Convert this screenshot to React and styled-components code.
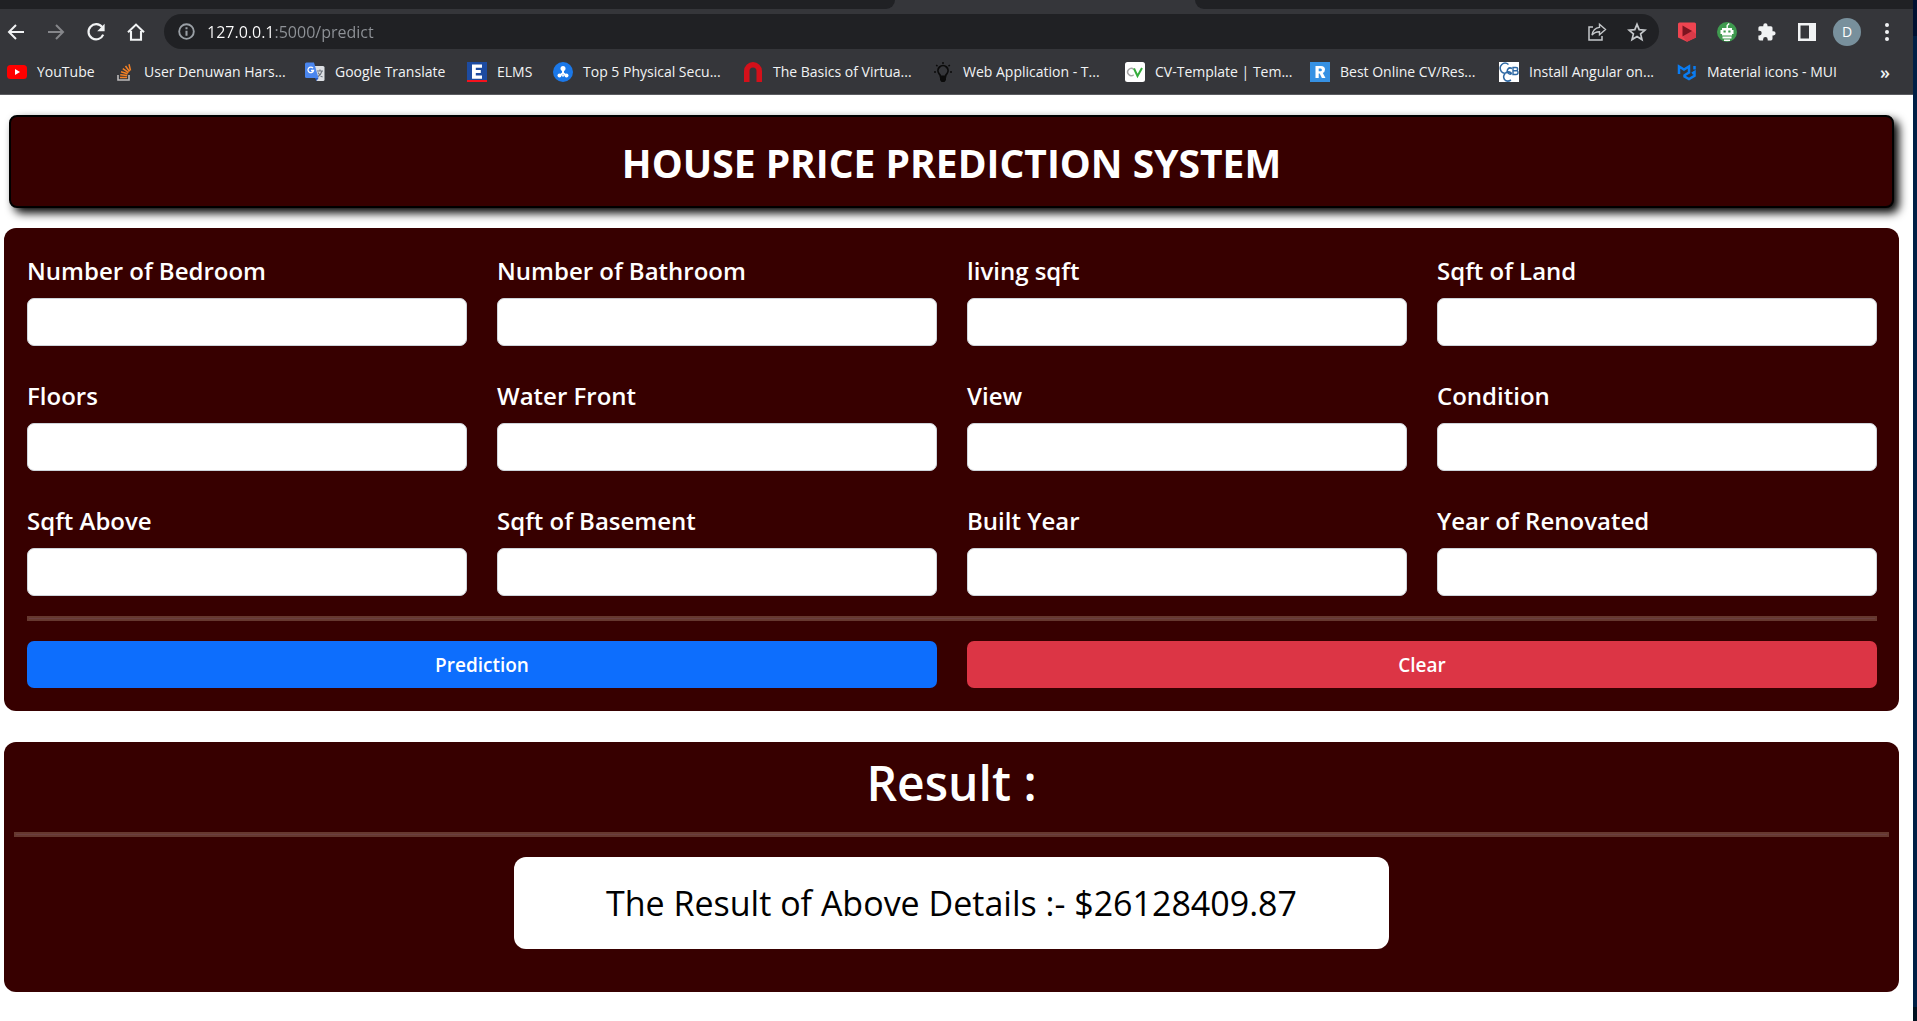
import React from "react";
import styled, { createGlobalStyle } from "styled-components";

const GlobalStyle = createGlobalStyle`
  *, *::before, *::after { box-sizing: border-box; }
  body {
    margin: 0;
    background: #fff;
    font-family: "Open Sans", "Noto Sans", sans-serif;
  }
  h1, h2, p { margin: 0; }
  button, input { font: inherit; }
`;

const Screen = styled.div`
  display: flex;
  min-height: 100vh;
`;

const Browser = styled.div`
  flex: 1;
  min-width: 0;
`;

const DesktopEdge = styled.div`
  width: 4px;
  background: linear-gradient(#001030 0 36px, #001f45 36px calc(100% - 14px), #00101f 0);
`;

const TabStrip = styled.div`
  display: grid;
  grid-template-columns: 895fr 300px 718fr;
  height: 9px;
  background: #35363a;
`;

const TabGap = styled.div`
  background: #202124;
  border-bottom-right-radius: ${(p) => (p.$side === "left" ? "9px" : "0")};
  border-bottom-left-radius: ${(p) => (p.$side === "right" ? "9px" : "0")};
`;

const Toolbar = styled.div`
  display: flex;
  align-items: center;
  height: 45px;
  padding-right: 6px;
  background: #35363a;
`;

const NavButtons = styled.div`
  display: flex;
  gap: 8px;
  margin-right: 12px;
`;

const IconButton = styled.button`
  display: grid;
  place-items: center;
  flex: none;
  width: ${(p) => p.$width || 40}px;
  height: 32px;
  padding: 0;
  border: 0;
  background: none;
  color: ${(p) => p.$color || "#f1f3f4"};
`;

const Omnibox = styled.div`
  display: flex;
  align-items: center;
  flex: 1;
  height: 35px;
  margin-right: 8px;
  padding: 0 2px 0 14px;
  border-radius: 18px;
  background: #202124;
  color: #9aa0a6;
`;

const Address = styled.input`
  flex: 1;
  min-width: 0;
  margin-left: 12px;
  padding: 0;
  border: 0;
  outline: 0;
  font-size: 16px;
  line-height: 24px;
  color: #fff;
  background: linear-gradient(to right, #fff 67px, #8f9398 67px);
  background-clip: text;
  -webkit-text-fill-color: transparent;
`;

const Avatar = styled.span`
  display: grid;
  place-items: center;
  width: 28px;
  height: 28px;
  border-radius: 50%;
  background: #78909c;
  color: #fff;
  font-size: 14px;
`;

const BookmarksBar = styled.nav`
  display: flex;
  align-items: center;
  height: 41px;
  padding: 0 6px 5px 7px;
  border-bottom: 1px solid #5b5c60;
  background: #35363a;
`;

const Bookmark = styled.a`
  display: flex;
  align-items: center;
  flex: none;
  gap: 10px;
  width: ${(p) => p.$width}px;
  color: #f1f3f4;
  font-size: 14px;
  line-height: 20px;
  white-space: nowrap;
  text-decoration: none;

  svg { flex: none; }
`;

const MoreBookmarks = styled.button`
  width: 44px;
  margin-left: auto;
  padding: 0;
  border: 0;
  background: none;
  color: #f1f3f4;
  font-size: 18px;
  font-weight: 600;
  line-height: 20px;
`;

const Page = styled.main`
  padding: 20px 14px 28px 4px;
`;

const Banner = styled.header`
  display: grid;
  place-items: center;
  height: 93px;
  margin: 0 5px 20px;
  padding-top: 2px;
  border: 2px solid #000;
  border-radius: 8px;
  background: #370000;
  box-shadow: 5px 5px 10px #000;
`;

const BannerTitle = styled.h1`
  color: #fff;
  font-size: 39px;
  font-weight: 700;
  line-height: 48px;
`;

const FormPanel = styled.form`
  padding: 24px 22px 23px 23px;
  border-radius: 12px;
  background: #370000;
`;

const Fields = styled.div`
  display: grid;
  grid-template-columns: repeat(4, 1fr);
  gap: 31px 30px;
`;

const Field = styled.div`
  display: flex;
  flex-direction: column;
  gap: 8px;
`;

const FieldLabel = styled.label`
  color: #fff;
  font-size: 24px;
  font-weight: 600;
  line-height: 38px;
`;

const TextBox = styled.input`
  width: 100%;
  height: 48px;
  padding: 6px 12px;
  border: 1px solid #ced4da;
  border-radius: 7px;
  background: #fff;
  font-size: 20px;
`;

const Rule = styled.hr`
  height: 5px;
  margin: 20px 0;
  border: 2px solid #66382f;
  background: #6a3f40;
`;

const Actions = styled.div`
  display: grid;
  grid-template-columns: repeat(2, 1fr);
  gap: 30px;
`;

const ActionButton = styled.button`
  height: 47px;
  border: 0;
  border-radius: 7px;
  background: ${(p) => p.$color};
  color: #fff;
  font-size: 19px;
  font-weight: 600;
`;

const ResultPanel = styled.section`
  margin-top: 31px;
  padding: 12px 10px 43px;
  border-radius: 12px;
  background: #370000;
`;

const ResultTitle = styled.h2`
  color: #fff;
  font-size: 48px;
  font-weight: 600;
  line-height: 58px;
  text-align: center;
`;

const ResultBox = styled.p`
  display: grid;
  place-items: center;
  width: 47%;
  max-width: 875px;
  height: 92px;
  margin: 0 auto;
  border-radius: 12px;
  background: #fff;
  color: #000;
  font-size: 34px;
  font-weight: 500;
`;

const Icon = ({ size = 20, children }) => (
  <svg width={size} height={size} viewBox="0 0 20 20" fill="none" aria-hidden="true">
    {children}
  </svg>
);

const Arrow = ({ flip }) => (
  <Icon>
    <path
      d={flip ? "M2 10h15M10 3l7 7-7 7" : "M18 10H3M10 3l-7 7 7 7"}
      stroke="currentColor"
      strokeWidth="2"
    />
  </Icon>
);

const ReloadIcon = () => (
  <Icon>
    <path d="M16.2 5.2A7.6 7.6 0 1 0 17.2 12.6" stroke="currentColor" strokeWidth="2.2" />
    <path d="M18.6 1.8v7.4h-7.4z" fill="currentColor" />
  </Icon>
);

const HomeIcon = () => (
  <Icon>
    <path d="M2 10.3 10 2.6l8 7.7M5 9v8.8h10V9" stroke="currentColor" strokeWidth="2.1" />
  </Icon>
);

const InfoIcon = () => (
  <Icon size={17}>
    <circle cx="10" cy="10" r="8.6" stroke="currentColor" strokeWidth="2.2" />
    <path d="M10 9v6M10 5v2.3" stroke="currentColor" strokeWidth="2.4" />
  </Icon>
);

const ShareIcon = () => (
  <Icon>
    <path d="M6 5H2v13h13v-4" stroke="currentColor" strokeWidth="1.5" />
    <path d="M12.5 2.2 18.5 7.6l-6 5.2V9.7C9 9.6 6.8 10.8 5 13.2 5.6 9 8 5.9 12.5 5.4z" stroke="currentColor" strokeWidth="1.4" />
  </Icon>
);

const StarIcon = () => (
  <Icon>
    <path d="m10 2.3 2.2 5.3 5.8.5-4.4 3.8 1.4 5.7-5-3-5 3 1.4-5.7L2 8.1l5.8-.5z" stroke="currentColor" strokeWidth="1.7" />
  </Icon>
);

const ShieldPlayIcon = () => (
  <Icon>
    <path d="M1 2q0-1.5 1.500-1.500h15q1.500 0 1.500 1.500v13.500L10 19.800 1 15.500z" fill="#ef4450" />
    <path d="m6 15 8-7 5 4v3.500L10 19.800z" fill="#d93a48" />
    <path d="M5.500 3.500v11l9.500-5.500z" fill="#7c1420" />
  </Icon>
);

const RobotIcon = () => (
  <Icon>
    <circle cx="10" cy="10" r="10" fill="#3f9a4f" />
    <path d="M10.200 6V3.500l2-2" stroke="#fff" strokeWidth="1.400" />
    <path d="M5 6h10v2h1.500v4H15v1.500H5V12H3.500V8H5zM5.500 14.500h9v2h-9zM7 17.500h6v1.500H7z" fill="#fff" />
    <path d="M6.500 8.500h2.200v2H6.500zM11.300 8.500h2.200v2h-2.200z" fill="#3f9a4f" />
  </Icon>
);

const PuzzleIcon = () => (
  <Icon>
    <path
      d="M16.500 9.200H15.500V5.800q0-1.600-1.600-1.600h-3.400V3.300a2.100 2.100 0 0 0-4.200 0v.9H2.900q-1.500 0-1.500 1.600v3h1a2.300 2.300 0 0 1 0 4.600h-1v3.300Q1.400 18.400 3 18.400h3.100v-1a2.300 2.300 0 0 1 4.600 0v1h3.200q1.600 0 1.600-1.600v-3.400h1a2.100 2.100 0 0 0 0-4.200z"
      fill="currentColor"
    />
  </Icon>
);

const SidePanelIcon = () => (
  <Icon>
    <path fillRule="evenodd" d="M1 1h18v18H1zM3.500 3.500v13h8.500v-13z" fill="currentColor" />
  </Icon>
);

const MenuIcon = () => (
  <Icon>
    <circle cx="10" cy="3" r="2" fill="currentColor" />
    <circle cx="10" cy="10" r="2" fill="currentColor" />
    <circle cx="10" cy="17" r="2" fill="currentColor" />
  </Icon>
);

const YouTubeIcon = () => (
  <Icon>
    <rect y="3" width="20" height="14" rx="3.500" fill="#f00" />
    <path d="M8 7v6l5-3z" fill="#fff" />
  </Icon>
);

const StackIcon = () => (
  <Icon>
    <path d="M4 13v5h11v-5" stroke="#bcbbbb" strokeWidth="1.600" />
    <path d="M6 15.600h7M6.200 12.800l7 .8M7 9.800l6.600 2M8.800 6.600l5.700 4M11.500 4l4 5.500M15 2.300l1.500 6.200" stroke="#f48024" strokeWidth="1.500" />
  </Icon>
);

const TranslateIcon = () => (
  <Icon>
    <path d="M8 4h10q1.500 0 1.500 1.500v12q0 1.500-1.500 1.500h-6.500z" fill="#dcdfe3" />
    <path d="M12 9h6M15 7.500V9M17 9q-1 4-4.500 6M13 10.500q1.500 3 4.500 4.500" stroke="#6f7680" strokeWidth="1.100" />
    <path d="M1.500.5H9l4.500 15.500h-12Q0 16 0 14.500V2Q0 .5 1.500.5z" fill="#4a86ee" />
    <path d="M10 16h3.500L11.500 19z" fill="#2459c4" />
    <path d="M8 6.200a2.800 2.800 0 1 0 .5 2.300H6" stroke="#fff" strokeWidth="1.300" />
  </Icon>
);

const ElmsIcon = () => (
  <Icon>
    <rect width="20" height="20" fill="#1d4ba0" />
    <path d="M0 18h20v2H0z" fill="#f5121d" />
    <path d="M5 2.500h10v3.200H8.800v2.400h5v3h-5v2.500H15v3.200H5z" fill="#fff" />
  </Icon>
);

const NetworkIcon = () => (
  <Icon>
    <circle cx="10" cy="10" r="10" fill="#1b78e8" />
    <circle cx="10" cy="6.500" r="2.500" fill="#fff" />
    <path d="M10 7v4L6.300 14M10 11l3.700 3" stroke="#fff" strokeWidth="2" />
    <circle cx="6.500" cy="13.500" r="2" fill="#fff" />
    <circle cx="13.500" cy="13.500" r="2" fill="#fff" />
    <circle cx="10" cy="13.700" r="1" fill="#fff" />
  </Icon>
);

const ArchIcon = () => (
  <Icon>
    <path d="M1 20V9a9 9 0 0 1 18 0v11h-5.500V9a3.500 3.500 0 0 0-7 0v11z" fill="#d4101a" />
  </Icon>
);

const BulbIcon = () => (
  <Icon>
    <path d="M7.500 14.500q0-1.500-1.300-2.600a5 5 0 1 1 7.600 0q-1.300 1.100-1.300 2.600z" stroke="#0b0b0b" strokeWidth="1.800" />
    <path d="M7 14h6v4l-1.500 2h-3L7 18z" fill="#0b0b0b" />
    <path d="M10 0v2M3.200 3l1.300 1.300M16.800 3l-1.300 1.300M1 10h2M17 10h2" stroke="#0b0b0b" strokeWidth="1.500" />
  </Icon>
);

const CvIcon = () => (
  <Icon>
    <rect width="20" height="20" rx="2.500" fill="#fff" />
    <path d="M8.700 7.300a3.600 3.600 0 1 0 0 5.400" stroke="#a5a5a5" strokeWidth="1.500" />
    <path d="m9 6.500 3.500 7.500L17 6" stroke="#35ac3c" strokeWidth="2" />
  </Icon>
);

const ResumeIcon = () => (
  <Icon>
    <rect width="20" height="20" fill="#3691e3" />
    <path fillRule="evenodd" d="M5.500 4H11q4 0 4 3.600 0 2.500-2.200 3.300L15.500 16h-3.600l-2.200-4.500H8.700V16H5.500zM8.700 6.500V9.200h1.900q1.300 0 1.300-1.300t-1.300-1.400z" fill="#fff" />
  </Icon>
);

const AngularIcon = () => (
  <Icon>
    <rect width="20" height="20" fill="#fff" />
    <path d="M9.500 2.500Q6-.5 2.800 2.500T2.500 9.800q2.500 2.500 5.500.5M12.500 11Q8.500 8.500 6 11.500t-.5 6q2.500 3 6.500.5M13 6.500Q10.500 5 9 7t0 4q2 2 4 .5" stroke="#2e68a3" strokeWidth="1.500" />
    <path d="M14 5.500v7h3q2 0 2-2t-2-1.800q1.700 0 1.700-1.600T17 5.500zM14 8.800h3" stroke="#2e68a3" strokeWidth="1.400" />
  </Icon>
);

const MuiIcon = () => (
  <Icon>
    <path d="M2 12V4.500l5 3 5-3v6l-4.500 2.700" stroke="#0a7cf2" strokeWidth="2.500" />
    <path d="M7.500 12.500v2l4.500 2.500 5.500-3.200V10l-2.500 1.500M17.500 4v3.500" stroke="#0a7cf2" strokeWidth="2.500" />
  </Icon>
);

const bookmarks = [
  { text: "YouTube", icon: YouTubeIcon, width: 107 },
  { text: "User Denuwan Hars...", icon: StackIcon, width: 191 },
  { text: "Google Translate", icon: TranslateIcon, width: 162 },
  { text: "ELMS", icon: ElmsIcon, width: 86 },
  { text: "Top 5 Physical Secu...", icon: NetworkIcon, width: 190 },
  { text: "The Basics of Virtua...", icon: ArchIcon, width: 190 },
  { text: "Web Application - T...", icon: BulbIcon, width: 192 },
  { text: "CV-Template | Tem...", icon: CvIcon, width: 185 },
  { text: "Best Online CV/Res...", icon: ResumeIcon, width: 189 },
  { text: "Install Angular on...", icon: AngularIcon, width: 178 },
  { text: "Material icons - MUI", icon: MuiIcon, width: 170 },
];

const fields = [
  "Number of Bedroom",
  "Number of Bathroom",
  "living sqft",
  "Sqft of Land",
  "Floors",
  "Water Front",
  "View",
  "Condition",
  "Sqft Above",
  "Sqft of Basement",
  "Built Year",
  "Year of Renovated",
];

const toId = (label) => label.toLowerCase().replace(/\s+/g, "-");

export default function App() {
  return (
    <>
      <GlobalStyle />
      <Screen>
        <Browser>
          <TabStrip>
            <TabGap $side="left" />
            <span />
            <TabGap $side="right" />
          </TabStrip>

          <Toolbar>
            <NavButtons>
              <IconButton $width={32} aria-label="Back"><Arrow /></IconButton>
              <IconButton $width={32} $color="#85868a" aria-label="Forward"><Arrow flip /></IconButton>
              <IconButton $width={32} aria-label="Reload"><ReloadIcon /></IconButton>
              <IconButton $width={32} aria-label="Home"><HomeIcon /></IconButton>
            </NavButtons>
            <Omnibox>
              <InfoIcon />
              <Address type="text" aria-label="Address" defaultValue="127.0.0.1:5000/predict" />
              <IconButton $color="#c4c7ca" aria-label="Share"><ShareIcon /></IconButton>
              <IconButton $color="#c4c7ca" aria-label="Bookmark this page"><StarIcon /></IconButton>
            </Omnibox>
            <IconButton aria-label="Video extension"><ShieldPlayIcon /></IconButton>
            <IconButton aria-label="Robot extension"><RobotIcon /></IconButton>
            <IconButton aria-label="Extensions"><PuzzleIcon /></IconButton>
            <IconButton aria-label="Side panel"><SidePanelIcon /></IconButton>
            <IconButton aria-label="Profile"><Avatar>D</Avatar></IconButton>
            <IconButton aria-label="Menu"><MenuIcon /></IconButton>
          </Toolbar>

          <BookmarksBar>
            {bookmarks.map(({ text, icon: Favicon, width }) => (
              <Bookmark key={text} href="#" $width={width}>
                <Favicon />
                {text}
              </Bookmark>
            ))}
            <MoreBookmarks aria-label="More bookmarks">»</MoreBookmarks>
          </BookmarksBar>

          <Page>
            <Banner>
              <BannerTitle>HOUSE PRICE PREDICTION SYSTEM</BannerTitle>
            </Banner>

            <FormPanel onSubmit={(e) => e.preventDefault()}>
              <Fields>
                {fields.map((label) => (
                  <Field key={label}>
                    <FieldLabel htmlFor={toId(label)}>{label}</FieldLabel>
                    <TextBox id={toId(label)} type="text" />
                  </Field>
                ))}
              </Fields>
              <Rule />
              <Actions>
                <ActionButton type="submit" $color="#0d6efd">Prediction</ActionButton>
                <ActionButton type="reset" $color="#dc3545">Clear</ActionButton>
              </Actions>
            </FormPanel>

            <ResultPanel>
              <ResultTitle>Result :</ResultTitle>
              <Rule />
              <ResultBox>The Result of Above Details :- $26128409.87</ResultBox>
            </ResultPanel>
          </Page>
        </Browser>
        <DesktopEdge />
      </Screen>
    </>
  );
}
